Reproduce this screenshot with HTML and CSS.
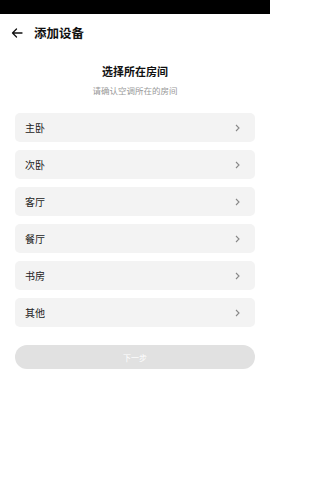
FILE: index.html
```html
<!DOCTYPE html>
<html lang="zh">
<head>
<meta charset="utf-8">
<link rel="stylesheet" href="styles.css">
</head>
<body>
<div class="status"></div>
<header class="header">
  <svg class="back" width="12" height="10" viewBox="0 0 12 10"><path d="M11 5H1.5M5.5 1L1.5 5l4 4" fill="none" stroke="#111" stroke-width="1.3" stroke-linecap="round" stroke-linejoin="round"/></svg>
  <span class="title">添加设备</span>
</header>
<main class="main">
  <h1 class="heading">选择所在房间</h1>
  <p class="sub">请确认空调所在的房间</p>
  <ul class="list">
    <li class="row"><span>主卧</span><svg class="chev" width="5" height="8" viewBox="0 0 5 8"><path d="M1 1l3 3-3 3" fill="none" stroke="#888" stroke-width="1.1"/></svg></li>
    <li class="row"><span>次卧</span><svg class="chev" width="5" height="8" viewBox="0 0 5 8"><path d="M1 1l3 3-3 3" fill="none" stroke="#888" stroke-width="1.1"/></svg></li>
    <li class="row"><span>客厅</span><svg class="chev" width="5" height="8" viewBox="0 0 5 8"><path d="M1 1l3 3-3 3" fill="none" stroke="#888" stroke-width="1.1"/></svg></li>
    <li class="row"><span>餐厅</span><svg class="chev" width="5" height="8" viewBox="0 0 5 8"><path d="M1 1l3 3-3 3" fill="none" stroke="#888" stroke-width="1.1"/></svg></li>
    <li class="row"><span>书房</span><svg class="chev" width="5" height="8" viewBox="0 0 5 8"><path d="M1 1l3 3-3 3" fill="none" stroke="#888" stroke-width="1.1"/></svg></li>
    <li class="row"><span>其他</span><svg class="chev" width="5" height="8" viewBox="0 0 5 8"><path d="M1 1l3 3-3 3" fill="none" stroke="#888" stroke-width="1.1"/></svg></li>
  </ul>
  <button class="next">下一步</button>
</main>
</body>
</html>
```
FILE: styles.css
```css
* { box-sizing: border-box; }
html, body { margin: 0; padding: 0; background: #fff; }
body {
  font-family: "Noto Sans CJK SC", "Noto Sans", sans-serif;
  color: #222;
  width: 270px;
  min-height: 480px;
}
.status { height: 14px; background: #000; }
.header {
  height: 38px;
  display: flex;
  align-items: center;
  padding-left: 11px;
}
.back { display: block; margin-right: 11px; }
.title { font-size: 12.5px; font-weight: 700; color: #111; line-height: 14px; }
.main { padding: 0 15px; }
.heading {
  margin: 10px 0 0;
  font-size: 11px;
  font-weight: 700;
  text-align: center;
  line-height: 18px;
  color: #111;
}
.sub {
  margin: 4px 0 0;
  font-size: 8.5px;
  color: #999;
  text-align: center;
  line-height: 12px;
}
.list {
  list-style: none;
  margin: 17px 0 0;
  padding: 0;
  display: flex;
  flex-direction: column;
  gap: 8px;
}
.row {
  height: 29px;
  background: #f3f3f3;
  border-radius: 5px;
  display: flex;
  align-items: center;
  justify-content: space-between;
  padding: 0 15px 0 10px;
  font-size: 10px;
  color: #222;
}
.chev { display: block; }
.next {
  display: block;
  width: 100%;
  margin-top: 18px;
  height: 24px;
  border: 0;
  border-radius: 12px;
  background: #e1e1e1;
  color: #fff;
  font-family: inherit;
  font-size: 8px;
  padding: 0;
}
```
